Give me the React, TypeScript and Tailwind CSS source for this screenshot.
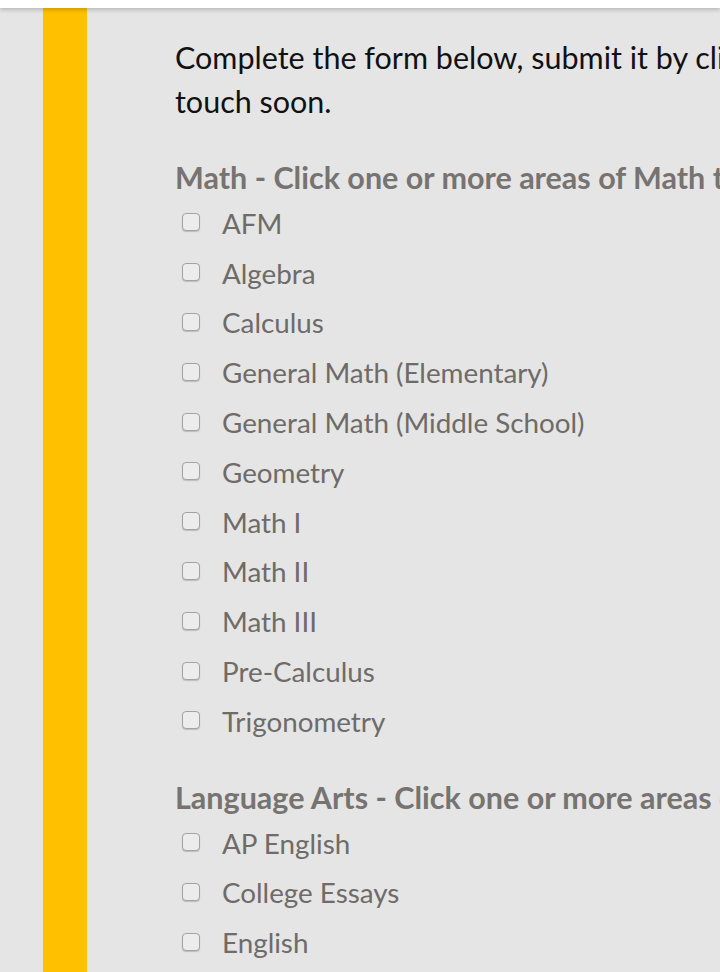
import React from 'react';

const mathAreas = [
  'AFM',
  'Algebra',
  'Calculus',
  'General Math (Elementary)',
  'General Math (Middle School)',
  'Geometry',
  'Math I',
  'Math II',
  'Math III',
  'Pre-Calculus',
  'Trigonometry',
];

const languageAreas = ['AP English', 'College Essays', 'English'];

function CheckItem({ label }: { label: string }) {
  return (
    <label className="flex items-center h-[49.8px] whitespace-nowrap">
      <span className="ml-[7px] -mt-[3px] w-[18px] h-[18px] rounded-[4px] border border-[#a3a3a3] bg-[#ececec] shadow-[0_1px_1px_rgba(0,0,0,0.18)] shrink-0" />
      <span className="ml-[22px] text-[27.8px] leading-[40px] text-[#6e6b68]">{label}</span>
    </label>
  );
}

function Section({ title, items, className }: { title: string; items: string[]; className?: string }) {
  return (
    <div className={'flex flex-col ' + (className ?? '')}>
      <h2 className="text-[30.5px] font-bold text-[#767371] leading-[40px] whitespace-nowrap">{title}</h2>
      <div className="flex flex-col mt-[2px]">
        {items.map((item) => (
          <CheckItem key={item} label={item} />
        ))}
      </div>
    </div>
  );
}

export default function App() {
  return (
    <div className="w-[720px] h-[972px] overflow-hidden bg-[#e5e5e5] flex flex-col" style={{ fontFamily: 'Lato, "Open Sans", sans-serif' }}>
      <div className="h-[8px] bg-white shadow-[0_2px_4px_rgba(0,0,0,0.2)] shrink-0 relative z-10" />
      <div className="flex flex-1">
        <div className="ml-[43px] w-[44px] bg-[#ffc000] shrink-0" />
        <div className="ml-[88px] pt-[27px] flex flex-col w-[1000px]">
          <p className="text-[30.5px] leading-[44px] text-[#111111] whitespace-nowrap">
            Complete the form below, submit it by clicking the Submit button and we will be in
            <br />
            touch soon.
          </p>
          <Section className="mt-[34px]" title="Math - Click one or more areas of Math that you need help with" items={mathAreas} />
          <Section className="mt-[30px]" title="Language Arts - Click one or more areas of Language Arts that you need help with" items={languageAreas} />
        </div>
      </div>
    </div>
  );
}
